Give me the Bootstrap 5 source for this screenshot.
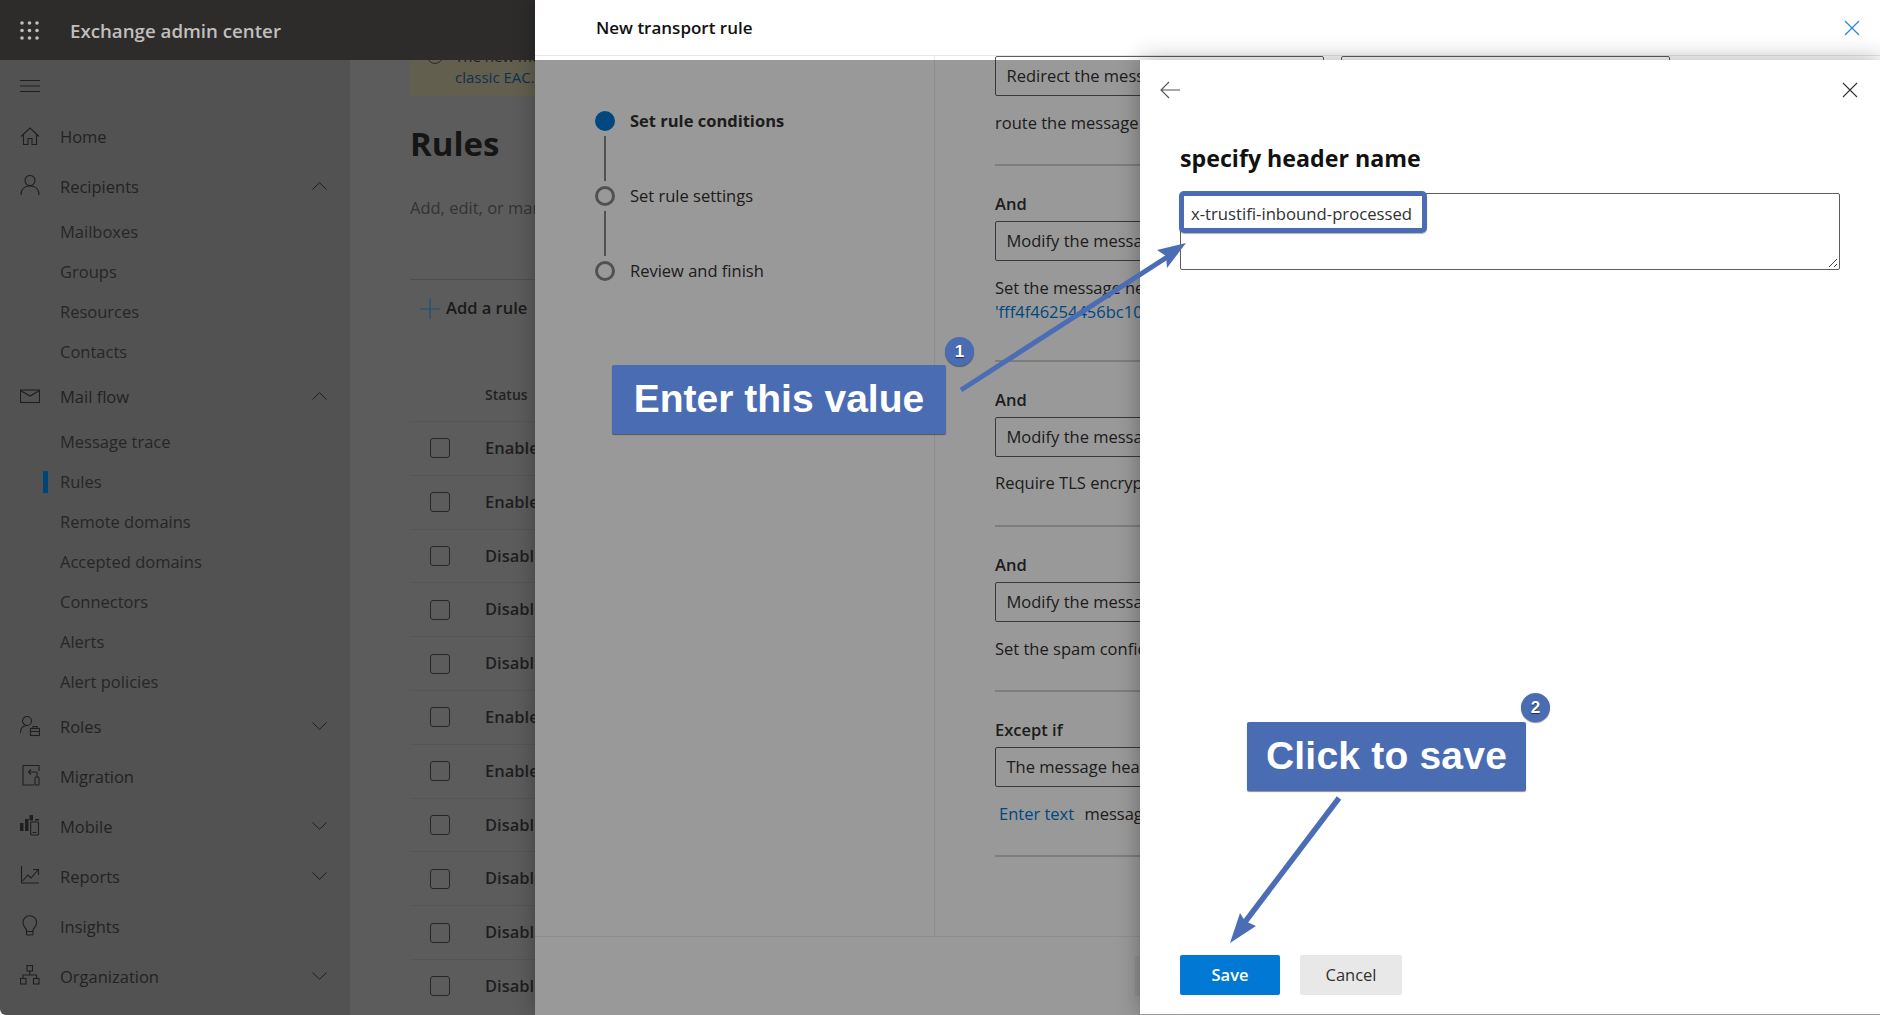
<!DOCTYPE html>
<html lang="en">
<head>
<meta charset="utf-8">
<title>Exchange admin center</title>
<link href="https://cdn.jsdelivr.net/npm/bootstrap@5.3.0/dist/css/bootstrap.min.css" rel="stylesheet">
<style>
html,body{height:100%;overflow:hidden}
body{font-family:"Open Sans","Liberation Sans",sans-serif;font-size:16px;color:#323130;background:#fff}
.stage{width:1880px;height:1015px;overflow:hidden;position:relative}
.shell-side{width:535px;flex:none}
.top-strip{height:60px;background:#2d2c2b;color:#c0bfbe;flex:none}
.waffle{margin-left:20px;margin-right:31px}
.app-title{font-size:18.7px;font-weight:600;white-space:nowrap;padding-top:2px}
.left-nav{width:350px;background:#525252;flex:none;border-bottom-left-radius:6px}
.burger{height:52px;padding-left:20px}
.left-nav .nav-link{color:#222;padding:0 23px 0 20px;font-size:16.5px;white-space:nowrap}
.nav-top{height:50px}
.nav-sub{height:40px;padding-left:60px!important;position:relative;color:#262626!important}
.nav-top svg.ico{margin-right:20px;flex:none}
.active-tick{position:absolute;left:43px;top:9px;width:5px;height:22px;background:#004578}
.chev{margin-left:auto;margin-bottom:3px}
.work-area{flex:1;background:#5c5c5c;overflow:hidden;padding-left:60px;min-width:0}
.notice{height:64px;margin-top:-28px;width:200px;background:#625f4e;color:#1e1e1e;font-size:15px;line-height:21px;white-space:nowrap;overflow:hidden}
.notice-ring{width:16px;height:16px;border:1px solid #2b2b2b;border-radius:50%;margin:16px 12px 0 17px;flex:none}
.notice-text{padding-top:14px}
.notice-link{color:#10314f}
.page-h{font-size:33px;font-weight:700;line-height:48px;color:#151515;margin:24px 0 0}
.page-sub{font-size:16.5px;line-height:24px;color:#333;margin-top:28px;white-space:nowrap}
.cmd-bar{height:58px;margin-top:59px;border-top:1px solid #4e4e4e;padding-left:10px;width:200px}
.add-lbl{font-size:16.5px;font-weight:600;color:#1a1a1a;margin-left:6px;white-space:nowrap}
.head-row{height:84px;padding:46px 0 0 75px;font-size:14px;font-weight:600;color:#222;line-height:24px}
.rule-row{height:53.8px;width:200px;border-top:1px solid #555;padding-left:20px;font-size:16.5px;font-weight:600;color:#1e1e1e;white-space:nowrap}
.rule-tick.form-check-input{width:20px;height:20px;margin:0 35px 0 0;background-color:transparent;border:1px solid #262626;border-radius:3px;flex:none}
.flyout{flex:1;position:relative;background:#fff;box-shadow:0 0 20px rgba(0,0,0,.3);min-width:0}
.fly-head{height:56px;border-bottom:1px solid #e8e7e6;padding-left:61px;padding-right:20px;flex:none}
.fly-title{font-size:17px;font-weight:600;color:#111}
.fly-main{flex:1;min-height:0}
.step-col{width:400px;flex:none;border-right:1px solid #edebe9;padding:55px 0 0 60px}
.step-item{height:20px;font-size:16.5px;line-height:20px;white-space:nowrap}
.step-dot{width:20px;height:20px;border-radius:50%;border:3px solid #8a8886;margin-right:15px;flex:none}
.step-now .step-dot{background:#0078d4;border-color:#0078d4}
.step-now{font-weight:700;color:#323130}
.step-link{width:2px;height:45px;background:#8a8886;margin:5px 0 5px 9px}
.cond-col{padding-left:60px;flex:1;min-width:0;overflow:hidden;white-space:nowrap}
.pick-row{width:1200px;gap:17px}
.pick{height:40px;width:329px;border:1px solid #605e5c;border-radius:2px;padding:0 10.500px;font-size:16.5px;line-height:38px;flex:none;white-space:nowrap;overflow:hidden}
.cond-h{font-size:16.5px;font-weight:600;line-height:24px;margin-top:26px;margin-bottom:5px}
.cond-line{font-size:16.5px;line-height:24px}
.cond-rule{height:2px;background:#d2d0ce;width:600px}
.cond-link{color:#0078d4;text-decoration:none}
.enter-gap{margin-right:6px}
.fly-foot{height:79px;border-top:1px solid #edebe9;flex:none;position:relative;padding:19px 0 0 600px}
.next-btn{width:100px;height:40px;background:#f3f2f1;border:0;border-radius:2px;flex:none}
.veil{position:absolute;left:0;right:0;top:60px;bottom:0;background:rgba(0,0,0,.4)}
.inner-panel{position:absolute;right:0;top:60px;width:740px;bottom:0;background:#fff;box-shadow:0 0 22px rgba(0,0,0,.32);border-bottom:1px solid #999;padding:0 41px 19px 40px}
.inner-top{height:60px;margin-left:-20px;margin-right:-19px;flex:none}
.icon-btn{background:none;border:0;padding:0;line-height:0}
.inner-h{font-size:23.2px;font-weight:700;color:#111;line-height:32px;margin:22px 0 19px}
.input-wrap{width:660px;height:77px}
.header-input.form-control{height:77px;width:660px;border:1px solid #605e5c;border-radius:2px;padding:8px 10px;font-size:16.7px;line-height:24px;color:#323130;font-family:inherit;box-shadow:none;resize:none}
.grip{position:absolute;right:2px;bottom:2px}
.save-btn.btn{width:100px;height:40px;background:#0078d4;color:#fff;border:0;border-radius:2px;font-size:16.5px;font-weight:600;padding:0}
.cancel-btn.btn{width:102px;height:40px;background:#e8e8e8;color:#323130;border:0;border-radius:2px;font-size:16.5px;font-weight:400;padding:0}
.callout{position:absolute;background:#4a6cb3;color:#fff;font-family:"Liberation Sans",Arial,sans-serif;font-weight:700;font-size:39px;line-height:1;border-radius:2px;box-shadow:0 1px 1px rgba(0,0,0,.45);white-space:nowrap;display:flex;align-items:center;justify-content:center;z-index:6;padding-bottom:2px}
.call-one{left:612px;top:365px;width:334px;height:69px}
.call-two{left:1247px;top:722px;width:279px;height:69px;letter-spacing:.2px}
.step-num{position:absolute;width:29px;height:29px;border-radius:50%;background:#4a6cb3;color:#fff;font-family:"Liberation Sans",Arial,sans-serif;font-weight:700;font-size:17px;display:flex;align-items:center;justify-content:center;box-shadow:0 1px 1px rgba(0,0,0,.45);text-shadow:0 1px 1px rgba(0,0,0,.6);z-index:6}
.num-one{left:945px;top:337px}
.num-two{left:1521px;top:693px}
.field-mark{position:absolute;left:1179px;top:191px;width:248px;height:42px;border:5px solid #4a6cb3;border-radius:5px;z-index:6;box-shadow:0 1px 1px rgba(0,0,0,.3)}
.arrows{position:absolute;left:0;top:0;z-index:5;pointer-events:none}
</style>
</head>
<body>
<div class="stage d-flex">
  <section class="shell-side d-flex flex-column">
    <header class="top-strip d-flex align-items-center">
      <svg class="waffle" width="19" height="19" viewBox="0 0 19 19" fill="#c0bfbe"><circle cx="2" cy="2" r="1.8"/><circle cx="9.5" cy="2" r="1.8"/><circle cx="17" cy="2" r="1.8"/><circle cx="2" cy="9.5" r="1.8"/><circle cx="9.5" cy="9.5" r="1.8"/><circle cx="17" cy="9.5" r="1.8"/><circle cx="2" cy="17" r="1.8"/><circle cx="9.5" cy="17" r="1.8"/><circle cx="17" cy="17" r="1.8"/></svg>
      <span class="app-title">Exchange admin center</span>
    </header>
    <div class="d-flex flex-grow-1" style="min-height:0">
      <nav class="left-nav">
        <div class="burger d-flex align-items-center"><svg width="20" height="14" viewBox="0 0 20 14" stroke="#1e1e1e" stroke-width="1"><path d="M0 1.5H20M0 7H20M0 12.5H20"/></svg></div>
        <div class="nav flex-column">
          <a class="nav-link nav-top d-flex align-items-center" href="#"><svg class="ico" width="20" height="24" viewBox="0 0 20 24" fill="none" stroke="#1f1f1f" stroke-width="1.1"><path d="M1 11.5 10 3l9 8.5M3.5 9.5V19.5H8V13.5h4v6h4.500V9.500"/></svg>Home</a>
          <a class="nav-link nav-top d-flex align-items-center" href="#"><svg class="ico" width="20" height="24" viewBox="0 0 20 24" fill="none" stroke="#1f1f1f" stroke-width="1.1"><circle cx="10" cy="5.500" r="5"/><path d="M1 20c0-6 4-9 9-9s9 3 9 9"/></svg>Recipients<svg class="chev" width="15" height="8" viewBox="0 0 15 8" fill="none" stroke="#1f1f1f"><path d="M.5 7.500 7.500.7l7 6.800"/></svg></a>
          <a class="nav-link nav-sub d-flex align-items-center" href="#">Mailboxes</a>
          <a class="nav-link nav-sub d-flex align-items-center" href="#">Groups</a>
          <a class="nav-link nav-sub d-flex align-items-center" href="#">Resources</a>
          <a class="nav-link nav-sub d-flex align-items-center" href="#">Contacts</a>
          <a class="nav-link nav-top d-flex align-items-center" href="#"><svg class="ico" width="20" height="24" viewBox="0 0 20 24" fill="none" stroke="#1f1f1f" stroke-width="1.100"><rect x=".5" y="5" width="19" height="12.500"/><path d="M.5 5.500 10 11l9.500-5.500"/></svg>Mail flow<svg class="chev" width="15" height="8" viewBox="0 0 15 8" fill="none" stroke="#1f1f1f"><path d="M.5 7.500 7.500.7l7 6.800"/></svg></a>
          <a class="nav-link nav-sub d-flex align-items-center" href="#">Message trace</a>
          <a class="nav-link nav-sub d-flex align-items-center" href="#"><span class="active-tick"></span>Rules</a>
          <a class="nav-link nav-sub d-flex align-items-center" href="#">Remote domains</a>
          <a class="nav-link nav-sub d-flex align-items-center" href="#">Accepted domains</a>
          <a class="nav-link nav-sub d-flex align-items-center" href="#">Connectors</a>
          <a class="nav-link nav-sub d-flex align-items-center" href="#">Alerts</a>
          <a class="nav-link nav-sub d-flex align-items-center" href="#">Alert policies</a>
          <a class="nav-link nav-top d-flex align-items-center" href="#"><svg class="ico" width="20" height="24" viewBox="0 0 20 24" fill="none" stroke="#1f1f1f" stroke-width="1.100"><circle cx="7" cy="6" r="4.500"/><path d="M.5 18C.5 13 3 10.500 7 10.500"/><rect x="10.500" y="13.500" width="9" height="7"/><path d="M13 13.500v-2h4v2M10.500 16.500h9"/></svg>Roles<svg class="chev" width="15" height="8" viewBox="0 0 15 8" fill="none" stroke="#1f1f1f"><path d="M.5.5l7 6.800 7-6.800"/></svg></a>
          <a class="nav-link nav-top d-flex align-items-center" href="#"><svg class="ico" width="20" height="24" viewBox="0 0 20 24" fill="none" stroke="#1f1f1f" stroke-width="1.100"><path d="M19 6V.5H3V20h11M16.500 7H8.500M11 4.500 8.500 7 11 9.500M17 7v5"/><rect x="15" y="12" width="4" height="8" rx="1"/></svg>Migration</a>
          <a class="nav-link nav-top d-flex align-items-center" href="#"><svg class="ico" width="20" height="24" viewBox="0 0 20 24" fill="none" stroke="#1f1f1f" stroke-width="1.100"><path fill="#1f1f1f" stroke="none" d="M0 8h3.500v8H0zM5 4h3.500v12H5zM9.500 0H13v5.500H9.500zM15 4h4v1.500h-4z"/><rect x="10.700" y="7" width="7.800" height="13" rx="1"/><path d="M12.500 17.500h4"/></svg>Mobile<svg class="chev" width="15" height="8" viewBox="0 0 15 8" fill="none" stroke="#1f1f1f"><path d="M.5.5l7 6.800 7-6.800"/></svg></a>
          <a class="nav-link nav-top d-flex align-items-center" href="#"><svg class="ico" width="20" height="24" viewBox="0 0 20 24" fill="none" stroke="#1f1f1f" stroke-width="1.100"><path d="M1.500 1V18H19M2.500 16 8 10l3 3 7-8M13 4.500h5.500V10"/></svg>Reports<svg class="chev" width="15" height="8" viewBox="0 0 15 8" fill="none" stroke="#1f1f1f"><path d="M.5.5l7 6.800 7-6.800"/></svg></a>
          <a class="nav-link nav-top d-flex align-items-center" href="#"><svg class="ico" width="20" height="24" viewBox="0 0 20 24" fill="none" stroke="#1f1f1f" stroke-width="1.100"><path d="M6.500 14.500C5 12.500 3 11 3 7.500a6.800 6.800 0 0 1 13.600 0C16.600 11 14.500 12.500 13 14.500V19a1 1 0 0 1-1 1H7.500a1 1 0 0 1-1-1zM6.500 16.500H13"/></svg>Insights</a>
          <a class="nav-link nav-top d-flex align-items-center" href="#"><svg class="ico" width="20" height="24" viewBox="0 0 20 24" fill="none" stroke="#1f1f1f" stroke-width="1.100"><rect x="7" y=".5" width="5.500" height="5.500"/><rect x=".5" y="13.500" width="5.500" height="5.500"/><rect x="13.500" y="13.500" width="5.500" height="5.500"/><path d="M9.700 6v4M3 13.500V10h13.500v3.500"/></svg>Organization<svg class="chev" width="15" height="8" viewBox="0 0 15 8" fill="none" stroke="#1f1f1f"><path d="M.5.5l7 6.800 7-6.800"/></svg></a>
        </div>
      </nav>
      <main class="work-area">
        <div class="notice d-flex"><span class="notice-ring"></span><div class="notice-text">The new modern EAC<br><span class="notice-link">classic EAC.</span></div></div>
        <h1 class="page-h">Rules</h1>
        <div class="page-sub">Add, edit, or manage mail flow rules</div>
        <div class="cmd-bar d-flex align-items-center">
          <svg width="20" height="20" viewBox="0 0 20 20" stroke="#1d4f76" stroke-width="1.200"><path d="M10 0V20M0 10H20"/></svg>
          <span class="add-lbl">Add a rule</span>
        </div>
        <div class="head-row">Status</div>
        <div class="rule-row d-flex align-items-center"><input class="form-check-input rule-tick" type="checkbox" aria-label="Select">Enabled</div>
        <div class="rule-row d-flex align-items-center"><input class="form-check-input rule-tick" type="checkbox" aria-label="Select">Enabled</div>
        <div class="rule-row d-flex align-items-center"><input class="form-check-input rule-tick" type="checkbox" aria-label="Select">Disabled</div>
        <div class="rule-row d-flex align-items-center"><input class="form-check-input rule-tick" type="checkbox" aria-label="Select">Disabled</div>
        <div class="rule-row d-flex align-items-center"><input class="form-check-input rule-tick" type="checkbox" aria-label="Select">Disabled</div>
        <div class="rule-row d-flex align-items-center"><input class="form-check-input rule-tick" type="checkbox" aria-label="Select">Enabled</div>
        <div class="rule-row d-flex align-items-center"><input class="form-check-input rule-tick" type="checkbox" aria-label="Select">Enabled</div>
        <div class="rule-row d-flex align-items-center"><input class="form-check-input rule-tick" type="checkbox" aria-label="Select">Disabled</div>
        <div class="rule-row d-flex align-items-center"><input class="form-check-input rule-tick" type="checkbox" aria-label="Select">Disabled</div>
        <div class="rule-row d-flex align-items-center"><input class="form-check-input rule-tick" type="checkbox" aria-label="Select">Disabled</div>
        <div class="rule-row d-flex align-items-center"><input class="form-check-input rule-tick" type="checkbox" aria-label="Select">Disabled</div>
      </main>
    </div>
  </section>

  <section class="flyout d-flex flex-column">
    <div class="fly-head d-flex align-items-center justify-content-between">
      <span class="fly-title">New transport rule</span>
      <button class="icon-btn" type="button" aria-label="Close"><svg width="16" height="16" viewBox="0 0 16 16" stroke="#2b88d8" stroke-width="1.300"><path d="M1 1 15 15M15 1 1 15"/></svg></button>
    </div>
    <div class="fly-main d-flex">
      <div class="step-col">
        <div class="step-item step-now d-flex"><span class="step-dot"></span>Set rule conditions</div>
        <div class="step-link"></div>
        <div class="step-item d-flex"><span class="step-dot"></span>Set rule settings</div>
        <div class="step-link"></div>
        <div class="step-item d-flex"><span class="step-dot"></span>Review and finish</div>
      </div>
      <div class="cond-col">
        <div class="pick-row d-flex"><div class="pick">Redirect the message to</div><div class="pick">the following recipients</div></div>
        <div class="cond-line" style="margin-top:15px">route the message to the recipients</div>
        <div class="cond-rule" style="margin-top:29px"></div>
        <div class="cond-h">And</div>
        <div class="pick">Modify the message properties</div>
        <div class="cond-line" style="margin-top:15px">Set the message header 'X-MS-Exchange'</div>
        <div class="cond-line"><a class="cond-link" href="#">'fff4f46254456bc10b4f'</a></div>
        <div class="cond-rule" style="margin-top:36px"></div>
        <div class="cond-h">And</div>
        <div class="pick">Modify the message security</div>
        <div class="cond-line" style="margin-top:14px">Require TLS encryption</div>
        <div class="cond-rule" style="margin-top:30px"></div>
        <div class="cond-h">And</div>
        <div class="pick">Modify the message properties</div>
        <div class="cond-line" style="margin-top:15px">Set the spam confidence level</div>
        <div class="cond-rule" style="margin-top:29px"></div>
        <div class="cond-h">Except if</div>
        <div class="pick">The message headers</div>
        <div class="cond-line" style="margin-top:15px;padding-left:4px"><a class="cond-link enter-gap" href="#">Enter text</a> message header</div>
        <div class="cond-rule" style="margin-top:29px"></div>
      </div>
    </div>
    <div class="fly-foot d-flex"><button class="next-btn" type="button">Next</button></div>
    <div class="veil"></div>
    <aside class="inner-panel d-flex flex-column">
      <div class="inner-top d-flex align-items-center justify-content-between">
        <button class="icon-btn" type="button" aria-label="Back"><svg width="20" height="18" viewBox="0 0 20 18" fill="none" stroke="#555" stroke-width="1.100"><path d="M20 9H1M9 1 1 9l8 8"/></svg></button>
        <button class="icon-btn" type="button" aria-label="Close"><svg width="16" height="16" viewBox="0 0 16 16" stroke="#333" stroke-width="1.100"><path d="M1 1 15 15M15 1 1 15"/></svg></button>
      </div>
      <h2 class="inner-h">specify header name</h2>
      <div class="input-wrap position-relative">
        <textarea class="form-control header-input" aria-label="Header name">x-trustifi-inbound-processed</textarea>
        <svg class="grip" width="10" height="10" viewBox="0 0 10 10" stroke="#444" stroke-width="1" fill="none"><path d="M1 9 9 1M6 9 9 6"/></svg>
      </div>
      <div class="d-flex mt-auto" style="gap:20px">
        <button class="btn save-btn" type="button">Save</button>
        <button class="btn cancel-btn" type="button">Cancel</button>
      </div>
    </aside>
  </section>

  <div class="field-mark"></div>
  <svg class="arrows" width="1880" height="1015" viewBox="0 0 1880 1015" fill="#4a6db5" stroke="none">
    <path d="M961 390 1172 254" stroke="#4a6db5" stroke-width="5" fill="none"/>
    <polygon points="1186,243 1157,250 1166,256 1167,268"/>
    <path d="M1339 798 1245 922" stroke="#4a6db5" stroke-width="5.500" fill="none"/>
    <polygon points="1230,943 1240,913 1245,921 1256,926"/>
  </svg>
  <div class="callout call-one">Enter this value</div>
  <div class="step-num num-one">1</div>
  <div class="callout call-two">Click to save</div>
  <div class="step-num num-two">2</div>
</div>
<script src="https://cdn.jsdelivr.net/npm/bootstrap@5.3.0/dist/js/bootstrap.bundle.min.js"></script>
</body>
</html>
